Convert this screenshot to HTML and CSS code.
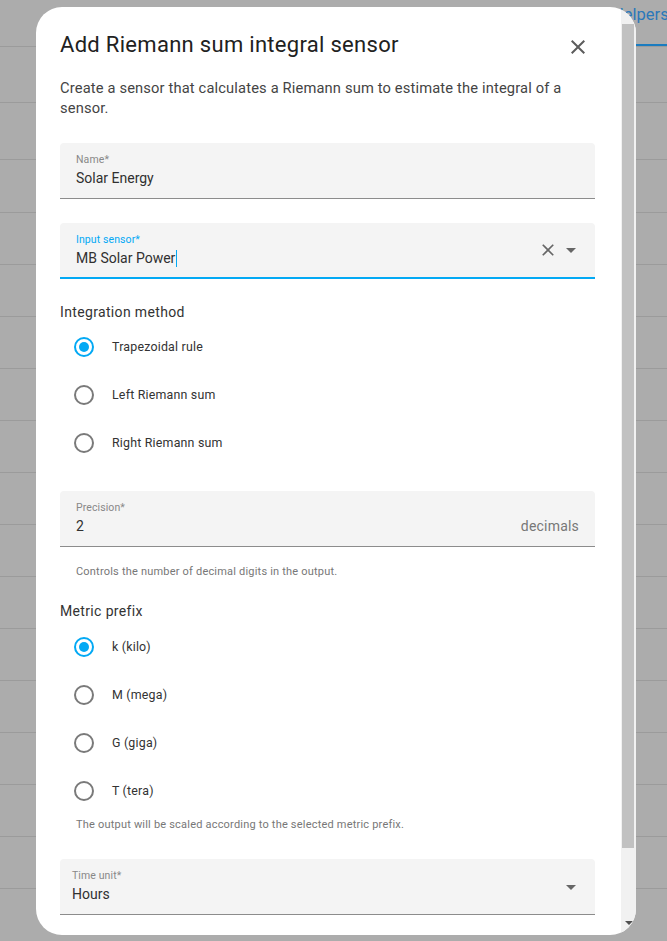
FILE: index.html
```html
<!DOCTYPE html>
<html lang="en">
<head>
<meta charset="utf-8">
<title>Add Riemann sum integral sensor</title>
<link rel="stylesheet" href="styles.css">
</head>
<body>
<div class="page">
  <header class="topbar"><span class="tab">Helpers</span></header>
  <div class="rows">
    <div class="row r56"></div>
    <div class="row r57"></div>
    <div class="row r53"></div>
    <div class="row"></div><div class="row"></div><div class="row"></div><div class="row"></div>
    <div class="row"></div><div class="row"></div><div class="row"></div><div class="row"></div>
    <div class="row"></div><div class="row"></div><div class="row"></div><div class="row"></div>
    <div class="row"></div>
  </div>
</div>

<div class="dialog">
  <div class="dialog-body">
    <div class="dialog-header">
      <h2 class="dialog-title">Add Riemann sum integral sensor</h2>
      <button class="close-btn" aria-label="Close">
        <svg viewBox="0 0 24 24" width="24" height="24"><path d="M19 6.41L17.59 5 12 10.59 6.41 5 5 6.41 10.59 12 5 17.59 6.41 19 12 13.41 17.59 19 19 17.59 13.41 12z"/></svg>
      </button>
    </div>
    <p class="desc">Create a sensor that calculates a Riemann sum to estimate the integral of a sensor.</p>

    <div class="field field-first">
      <div class="field-main">
        <div class="field-label">Name*</div>
        <div class="field-value">Solar Energy</div>
      </div>
    </div>

    <div class="field field-focused field-gap">
      <div class="field-main">
        <div class="field-label">Input sensor*</div>
        <div class="field-value">MB Solar Power<span class="caret"></span></div>
      </div>
      <svg class="clear-icon" viewBox="0 0 24 24" width="20" height="20"><path d="M19 6.41L17.59 5 12 10.59 6.41 5 5 6.41 10.59 12 5 17.59 6.41 19 12 13.41 17.59 19 19 17.59 13.41 12z"/></svg>
      <svg class="drop-icon" viewBox="0 0 24 24" width="24" height="24"><path d="M7 10l5 5 5-5z"/></svg>
    </div>

    <div class="group-title gt-integration">Integration method</div>
    <div class="radio-list rl-integration">
      <div class="radio-row"><span class="radio checked"></span><span class="radio-label">Trapezoidal rule</span></div>
      <div class="radio-row"><span class="radio"></span><span class="radio-label">Left Riemann sum</span></div>
      <div class="radio-row"><span class="radio"></span><span class="radio-label">Right Riemann sum</span></div>
    </div>

    <div class="field field-precision">
      <div class="field-main">
        <div class="field-label">Precision*</div>
        <div class="field-value">2</div>
      </div>
      <span class="suffix">decimals</span>
    </div>
    <div class="helper helper-precision">Controls the number of decimal digits in the output.</div>

    <div class="group-title gt-metric">Metric prefix</div>
    <div class="radio-list rl-metric">
      <div class="radio-row"><span class="radio checked"></span><span class="radio-label">k (kilo)</span></div>
      <div class="radio-row"><span class="radio"></span><span class="radio-label">M (mega)</span></div>
      <div class="radio-row"><span class="radio"></span><span class="radio-label">G (giga)</span></div>
      <div class="radio-row"><span class="radio"></span><span class="radio-label">T (tera)</span></div>
    </div>
    <div class="helper helper-metric">The output will be scaled according to the selected metric prefix.</div>

    <div class="field field-time">
      <div class="field-main">
        <div class="field-label">Time unit*</div>
        <div class="field-value">Hours</div>
      </div>
      <svg class="drop-icon" viewBox="0 0 24 24" width="24" height="24"><path d="M7 10l5 5 5-5z"/></svg>
    </div>
  </div>

  <div class="scrollbar">
    <div class="sb-button"></div>
    <div class="sb-thumb"></div>
    <div class="sb-track"></div>
    <div class="sb-button sb-down">
      <svg viewBox="0 0 8 4" width="8" height="4"><path d="M0 0h8L4 4z"/></svg>
    </div>
  </div>
</div>
</body>
</html>
```

FILE: styles.css
```css
html, body {
  margin: 0;
  padding: 0;
}

body {
  background: #acacac;
  font-family: Roboto, "Noto Sans", "Liberation Sans", sans-serif;
  height: 941px;
  overflow: hidden;
}

/* ---------- background page ---------- */
.topbar {
  height: 47px;
  box-sizing: border-box;
  border-bottom: 1px solid #9b9b9b;
  display: flex;
  padding-left: 612px;
  overflow: hidden;
}

.tab {
  display: block;
  height: 46px;
  box-sizing: border-box;
  padding: 5px 0 0 0;
  font-size: 16.5px;
  line-height: 20px;
  color: #2a78ba;
  white-space: nowrap;
  border-bottom: 2px solid #1b7cc0;
  min-width: 80px;
}

.row {
  height: 52px;
  box-sizing: border-box;
  border-bottom: 1px solid #9b9b9b;
}
.row.r56 { height: 56px; }
.row.r57 { height: 57px; }
.row.r53 { height: 53px; }

/* ---------- dialog ---------- */
.dialog {
  position: fixed;
  left: 36px;
  top: 7px;
  width: 600px;
  height: 928px;
  background: #ffffff;
  border-radius: 26px;
  overflow: hidden;
  display: flex;
}

.dialog-body {
  flex: 1;
  min-width: 0;
  padding: 24px 26px 0 24px;
  overflow: hidden;
}

.dialog-header {
  display: flex;
  align-items: center;
  justify-content: space-between;
  height: 28px;
}

.dialog-title {
  margin: 0;
  font-size: 22px;
  font-weight: 400;
  line-height: 28px;
  color: #212121;
  letter-spacing: 0.3px;
}

.close-btn {
  width: 24px;
  height: 24px;
  padding: 0;
  margin: 4px 5px 0 0;
  border: 0;
  background: transparent;
  display: flex;
}
.close-btn svg { fill: #5c5c5c; }

.desc {
  margin: 19px 0 0;
  font-size: 14.7px;
  line-height: 20px;
  color: #444444;
  letter-spacing: 0.15px;
}

/* ---------- text fields ---------- */
.field {
  height: 56px;
  box-sizing: border-box;
  background: #f4f4f4;
  border-radius: 4px 4px 0 0;
  border-bottom: 1px solid #8c8c8c;
  display: flex;
  align-items: center;
  padding: 0 12px 0 16px;
}

.field-first { margin-top: 25px; }
.field-gap { margin-top: 24px; }
.field-precision { margin-top: 24px; padding-right: 16px; }
.field-time { margin-top: 26px; padding-left: 12px; }

.field-focused {
  border-bottom: 2px solid #03a9f4;
}

.field-main {
  flex: 1;
  align-self: stretch;
  padding-top: 10px;
  min-width: 0;
}

.field-label {
  font-size: 10.5px;
  line-height: 14px;
  color: #888888;
  letter-spacing: 0.1px;
}
.field-focused .field-label { color: #03a9f4; }

.field-value {
  margin-top: 1px;
  font-size: 14px;
  line-height: 20px;
  color: #303030;
  display: flex;
  align-items: center;
}

.caret {
  display: inline-block;
  width: 1px;
  height: 17px;
  margin-left: 1px;
  background: #03a9f4;
}

.clear-icon { fill: #666666; margin-right: 1px; }
.drop-icon { fill: #666666; }

.suffix {
  align-self: flex-start;
  margin-top: 25px;
  font-size: 14px;
  line-height: 20px;
  color: #777777;
  letter-spacing: 0.2px;
}

.helper {
  padding-left: 16px;
  font-size: 11px;
  line-height: 16px;
  color: #777777;
  letter-spacing: 0.2px;
}
.helper-precision { margin-top: 17px; }
.helper-metric { margin-top: 2px; }

/* ---------- radio groups ---------- */
.group-title {
  font-size: 14px;
  line-height: 20px;
  color: #333333;
  letter-spacing: 0.35px;
}
.gt-integration { margin-top: 23px; }
.gt-metric { margin-top: 21px; }

.rl-integration { margin-top: 1px; }
.rl-metric { margin-top: 2px; }

.radio-row {
  height: 48px;
  display: flex;
  align-items: center;
  padding-left: 14px;
}

.radio {
  width: 20px;
  height: 20px;
  box-sizing: border-box;
  border: 2px solid #7a7a7a;
  border-radius: 50%;
  display: grid;
  place-items: center;
}
.radio.checked { border-color: #03a9f4; }
.radio.checked::after {
  content: "";
  width: 10px;
  height: 10px;
  border-radius: 50%;
  background: #03a9f4;
}

.radio-label {
  margin-left: 18px;
  font-size: 12.4px;
  line-height: 20px;
  color: #333333;
  letter-spacing: 0.2px;
}

/* ---------- scrollbar ---------- */
.scrollbar {
  width: 15px;
  flex: none;
  background: #f1f1f1;
  display: flex;
  flex-direction: column;
}
.sb-button {
  height: 17px;
  flex: none;
}
.sb-thumb {
  height: 824px;
  flex: none;
  margin: 0 2px 0 1px;
  background: #c1c1c1;
}
.sb-track { flex: 1; }
.sb-down {
  display: flex;
  justify-content: center;
  padding-top: 3px;
  box-sizing: border-box;
}
.sb-down svg { fill: #505050; }
```
